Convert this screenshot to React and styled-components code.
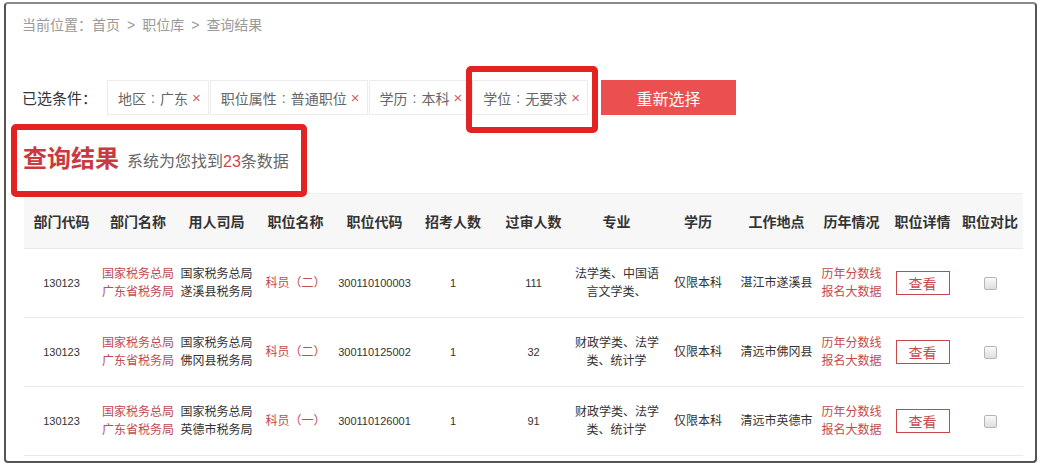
import React from 'react';
import styled, { createGlobalStyle } from 'styled-components';

const GlobalStyle = createGlobalStyle`
  body {
    margin: 0;
    background: #fff;
    font-family: "Liberation Sans", "Noto Sans CJK SC", sans-serif;
  }
`

const Frame = styled.div`
  position: relative;
  box-sizing: border-box;
  width: 1033px;
  height: 461px;
  margin: 2px 0 0 4px;
  padding: 11px 0 0 16px;
  border: 2px solid #555;
  border-top-color: #8a8a8a;
  border-radius: 4px;
  overflow: hidden;
`

const Crumbs = styled.div`
  height: 20px;
  line-height: 20px;
  font-size: 14px;
  color: #9a9a9a;
  span {
    margin: 0 7px;
    font-family: "Liberation Sans", sans-serif;
  }
`

const FilterRow = styled.div`
  display: flex;
  align-items: center;
  height: 35px;
  margin-top: 45px;
`

const FilterLabel = styled.div`
  font-size: 15px;
  color: #333;
  margin-right: 10px;
`

const Tag = styled.div`
  position: relative;
  display: flex;
  align-items: center;
  box-sizing: border-box;
  height: 35px;
  padding: 0 7px 0 10px;
  margin-right: ${p => p.$gap || 1}px;
  border: 1px solid #ececec;
  font-size: 14px;
  color: #666;
  background: #fff;
`

const Colon = styled.span`
  display: inline-block;
  width: 14px;
  text-align: center;
  font-family: "Liberation Sans", sans-serif;
`

const TagClose = styled.span`
  margin-left: 4px;
  font-family: "Liberation Sans", sans-serif;
  font-size: 15px;
  color: #d0606a;
`

const ResetButton = styled.button`
  width: 135px;
  height: 35px;
  border: 0;
  background: #ec4f4f;
  color: #fff;
  font-family: "Noto Sans CJK SC", sans-serif;
  font-size: 16px;
  cursor: pointer;
`

const Marker = styled.div`
  position: absolute;
  left: ${p => p.$l}px;
  top: ${p => p.$t}px;
  width: ${p => p.$w}px;
  height: ${p => p.$h}px;
  box-sizing: border-box;
  border: 6px solid #e32222;
  border-radius: 5px;
  pointer-events: none;
`

const ResultRow = styled.div`
  position: relative;
  display: flex;
  align-items: baseline;
  height: 30px;
  margin-top: 29px;
  padding-left: 1px;
`

const ResultTitle = styled.div`
  font-size: 24px;
  font-weight: bold;
  color: #c93a40;
  line-height: 30px;
`

const ResultInfo = styled.div`
  margin-left: 8px;
  font-size: 16px;
  color: #666;
  em {
    font-style: normal;
    color: #c9474b;
  }
`

const cols = '75px 78px 79px 79px 79px 78px 83px 83px 80px 77px 73px 69px 66px';

const Table = styled.div`
  width: 999px;
  margin: 19px 0 0 2px;
  border-top: 1px solid #efefef;
`

const HeadRow = styled.div`
  display: grid;
  grid-template-columns: ${cols};
  align-items: center;
  height: 54px;
  background: #f7f7f7;
  border-bottom: 1px solid #e8e8e8;
`

const HeadCell = styled.div`
  text-align: center;
  font-size: 14px;
  font-weight: bold;
  color: #333;
  white-space: nowrap;
`

const BodyRow = styled.div`
  display: grid;
  grid-template-columns: ${cols};
  align-items: center;
  height: 68px;
  border-bottom: 1px solid #e8e8e8;
`

const Cell = styled.div`
  text-align: center;
  font-size: ${p => (p.$num ? 11 : 12)}px;
  line-height: 18px;
  color: ${p => (p.$red ? '#c24a51' : '#333')};
  white-space: nowrap;
`

const ViewButton = styled.button`
  width: 54px;
  height: 24px;
  border: 1px solid #c9474b;
  background: #fff;
  color: #c9474b;
  font-family: "Noto Sans CJK SC", sans-serif;
  font-size: 14px;
  line-height: 20px;
  padding: 0;
`

const Check = styled.input`
  appearance: none;
  width: 13px;
  height: 13px;
  margin: 0;
  border: 1px solid #b5b5b5;
  border-radius: 2px;
  background: linear-gradient(#fafafa, #dedede);
  vertical-align: middle;
`

const headers = ['部门代码', '部门名称', '用人司局', '职位名称', '职位代码', '招考人数', '过审人数', '专业', '学历', '工作地点', '历年情况', '职位详情', '职位对比'];

const filters = [
  { k: '地区', v: '广东' },
  { k: '职位属性', v: '普通职位' },
  { k: '学历', v: '本科', gap: 2 },
];

const rows = [
  { bureau: '遂溪县税务局', post: '科员（二）', code: '300110100003', pass: '111', major: ['法学类、中国语', '言文学类、'], place: '湛江市遂溪县' },
  { bureau: '佛冈县税务局', post: '科员（二）', code: '300110125002', pass: '32', major: ['财政学类、法学', '类、统计学'], place: '清远市佛冈县' },
  { bureau: '英德市税务局', post: '科员（一）', code: '300110126001', pass: '91', major: ['财政学类、法学', '类、统计学'], place: '清远市英德市' },
];

const Lines = ({ items }) => items.map((t, i) => <div key={i}>{t}</div>);

export default function App() {
  return (
    <>
      <GlobalStyle />
      <Frame>
        <Crumbs>当前位置：首页<span>&gt;</span>职位库<span>&gt;</span>查询结果</Crumbs>

        <FilterRow>
          <FilterLabel>已选条件：</FilterLabel>
          {filters.map(f => (
            <Tag key={f.k} $gap={f.gap}>{f.k}<Colon>:</Colon>{f.v}<TagClose>×</TagClose></Tag>
          ))}
          <Tag $gap={13}>
            学位<Colon>:</Colon>无要求<TagClose>×</TagClose>
            <Marker $l={-7} $t={-15} $w={132} $h={67} />
          </Tag>
          <ResetButton>重新选择</ResetButton>
        </FilterRow>

        <ResultRow>
          <ResultTitle>查询结果</ResultTitle>
          <ResultInfo>系统为您找到<em>23</em>条数据</ResultInfo>
          <Marker $l={-11} $t={-20} $w={296} $h={73} />
        </ResultRow>

        <Table>
          <HeadRow>
            {headers.map(h => <HeadCell key={h}>{h}</HeadCell>)}
          </HeadRow>
          {rows.map(r => (
            <BodyRow key={r.code}>
              <Cell $num>130123</Cell>
              <Cell $red><Lines items={['国家税务总局', '广东省税务局']} /></Cell>
              <Cell><Lines items={['国家税务总局', r.bureau]} /></Cell>
              <Cell $red>{r.post}</Cell>
              <Cell $num>{r.code}</Cell>
              <Cell $num>1</Cell>
              <Cell $num>{r.pass}</Cell>
              <Cell><Lines items={r.major} /></Cell>
              <Cell>仅限本科</Cell>
              <Cell>{r.place}</Cell>
              <Cell $red><Lines items={['历年分数线', '报名大数据']} /></Cell>
              <Cell><ViewButton>查看</ViewButton></Cell>
              <Cell><Check type="checkbox" readOnly /></Cell>
            </BodyRow>
          ))}
        </Table>
      </Frame>
    </>
  );
}
